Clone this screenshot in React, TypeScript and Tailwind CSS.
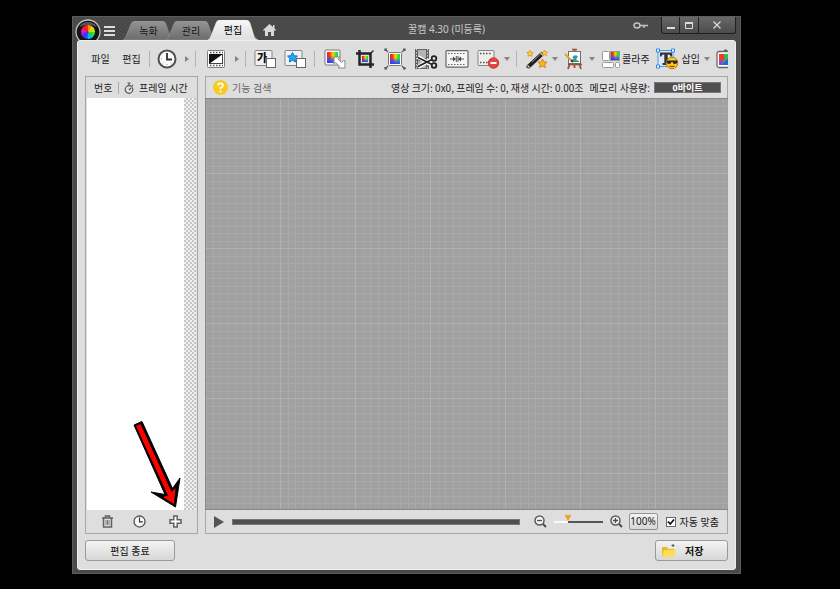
import React from "react";

const font = "font-['Noto_Sans','Noto_Sans_CJK_KR',sans-serif]";

type IconProps = { className?: string };
type Kids = { children?: React.ReactNode };

function Colors({ id, x, y, w, h }: { id: string; x: number; y: number; w: number; h: number }) {
  return (
    <g>
      <defs>
        <linearGradient id={id} x1="0" y1="0" x2="1" y2="0">
          <stop offset="0" stopColor="#ff1414" />
          <stop offset=".25" stopColor="#ff3a10" />
          <stop offset=".55" stopColor="#ffd400" />
          <stop offset=".8" stopColor="#3fe01c" />
          <stop offset="1" stopColor="#14d860" />
        </linearGradient>
        <linearGradient id={id + "v"} x1="0.600" y1="0" x2="0.400" y2="1">
          <stop offset=".35" stopColor="#2b50ff" stopOpacity="0" />
          <stop offset=".75" stopColor="#2b50ff" stopOpacity=".8" />
          <stop offset="1" stopColor="#3a34f8" />
        </linearGradient>
      </defs>
      <rect x={x} y={y} width={w} height={h} fill={`url(#${id})`} />
      <rect x={x} y={y} width={w} height={h} fill={`url(#${id}v)`} />
    </g>
  );
}

function ColorWheel() {
  const colors = ["#ff2a12", "#ff8a12", "#ffd21a", "#b6f000", "#3ee01c", "#12d890", "#12b7f0", "#1660ff", "#4b2ff0", "#a020e8", "#f019b0", "#ff1a3a"];
  return (
    <svg width="26" height="26" viewBox="0 0 26 26" aria-hidden="true">
      <circle cx="13" cy="13" r="12" fill="#141414" stroke="#c4c4c4" strokeWidth="1.300" />
      <path d="M4 8a10.500 10.500 0 0 1 18 0q-9-4-18 0z" fill="#555" />
      {colors.map((c, i) => {
        const a = ((i * 30 - 120) * Math.PI) / 180;
        const b = ((i * 30 - 87) * Math.PI) / 180;
        return (
          <path
            key={i}
            fill={c}
            d={`M13 13L${13 + 7 * Math.cos(a)} ${13 + 7 * Math.sin(a)}A7 7 0 0 1 ${13 + 7 * Math.cos(b)} ${13 + 7 * Math.sin(b)}Z`}
          />
        );
      })}
    </svg>
  );
}

function Tab({ children, active, width }: Kids & { active?: boolean; width: string }) {
  return (
    <button
      type="button"
      role="tab"
      aria-selected={!!active}
      className={`relative shrink-0 text-[10px] leading-[18px] ${width} ${active ? "z-10 h-5 text-black" : "-mr-2 h-[19px] text-[#181818]"}`}
    >
      <svg className="absolute inset-0 h-full w-full" viewBox="0 0 50 20" preserveAspectRatio="none" aria-hidden="true">
        <defs>
          <linearGradient id={active ? "tabOn" : "tabOff"} x1="0" y1="0" x2="0" y2="1">
            <stop offset="0" stopColor={active ? "#f6f6f6" : "#949494"} />
            <stop offset="1" stopColor={active ? "#dedede" : "#6c6c6c"} />
          </linearGradient>
        </defs>
        <path
          d="M0 20Q2 19 3 16L8 3Q9 0 12 0H38Q41 0 42 3L46 16Q47 19 50 20Z"
          fill={active ? "url(#tabOn)" : "url(#tabOff)"}
          stroke={active ? "#f0f0f0" : "#a0a0a0"}
          strokeWidth=".5"
        />
      </svg>
      <span className="relative">{children}</span>
    </button>
  );
}

function Tool({ label, className, children }: Kids & { label: string; className: string }) {
  return (
    <button type="button" aria-label={label} className={`flex h-6 shrink-0 items-center ${className}`}>
      {children}
    </button>
  );
}

function Divider({ className }: IconProps) {
  return <span className={`h-4 w-px shrink-0 bg-[#b4b4b4] ${className}`} />;
}

function Caret({ className, label }: IconProps & { label: string }) {
  return (
    <Tool label={label} className={className ?? ""}>
      <svg width="6" height="4" viewBox="0 0 6 4" aria-hidden="true">
        <path d="M0 0h6L3 4z" fill="#858585" />
      </svg>
    </Tool>
  );
}

function Next({ className, label }: IconProps & { label: string }) {
  return (
    <Tool label={label} className={className ?? ""}>
      <svg width="4" height="6" viewBox="0 0 4 6" aria-hidden="true">
        <path d="M0 0l4 3-4 3z" fill="#858585" />
      </svg>
    </Tool>
  );
}

function Clock({ size }: { size: number }) {
  return (
    <svg width={size} height={size} viewBox="0 0 20 20" fill="none" aria-hidden="true">
      <circle cx="10" cy="10" r="8.500" fill="#fafafa" stroke="#505050" strokeWidth="2" />
      <path d="M10 4v6.500h5" stroke="#303030" strokeWidth="1.800" />
      <path d="M4 10h1M10 16v-1M5.800 14.200l.6-.6M14.200 14.200l-.6-.6" stroke="#999" />
    </svg>
  );
}

function Star({ x, y, s, fill, stroke }: { x: number; y: number; s: number; fill: string; stroke: string }) {
  return (
    <path
      transform={`translate(${x} ${y}) scale(${s})`}
      d="M0-5L1.600-1.800 5-1.400 2.500 1 3.200 4.500 0 2.800-3.200 4.500-2.500 1-5-1.400-1.600-1.800Z"
      fill={fill}
      stroke={stroke}
      strokeLinejoin="round"
    />
  );
}

function Toolbar() {
  return (
    <div role="toolbar" aria-label="편집 도구" className="flex h-[35px] items-center overflow-hidden pl-[6px] text-[10px] leading-4 text-[#222]">
      <button type="button" className="mr-3 w-[19px] shrink-0 whitespace-nowrap">파일</button>
      <button type="button" className="w-[19px] shrink-0 whitespace-nowrap">편집</button>
      <Divider className="ml-2" />
      <Tool label="시간" className="ml-[7px]"><Clock size={20} /></Tool>
      <Next label="시간 더보기" className="ml-2" />
      <Divider className="ml-[6px]" />
      <Tool label="전환 효과" className="ml-[10px]">
        <svg width="20" height="20" viewBox="0 0 20 20" aria-hidden="true">
          <rect x="1.500" y="1.500" width="17" height="17" rx="1" fill="#fcfcfc" stroke="#7e7e7e" />
          <path d="M4 3.500h13M4 16.500h13" stroke="#555" strokeWidth="1.500" strokeDasharray="1.500 1.500" />
          <rect x="3.500" y="5.500" width="13" height="9" fill="#fff" stroke="#444" />
          <path d="M3 5h14L3 15z" fill="#111" />
        </svg>
      </Tool>
      <Next label="전환 더보기" className="ml-[9px]" />
      <Divider className="ml-[6px]" />
      <Tool label="텍스트 프레임" className="ml-2">
        <svg width="22" height="20" viewBox="0 0 22 20" aria-hidden="true">
          <rect x="1" y="1.500" width="17" height="15" rx="1" fill="#f2f2f2" stroke="#858585" />
          <text x="3" y="13" fontSize="11" fontWeight="800" fill="#111">가</text>
          <rect x="12.500" y="9.500" width="9" height="9" fill="#fff" stroke="#666" />
        </svg>
      </Tool>
      <Tool label="이미지 프레임" className="ml-2">
        <svg width="22" height="20" viewBox="0 0 22 20" aria-hidden="true">
          <rect x="1" y="1.500" width="17" height="15" rx="1" fill="#f2f2f2" stroke="#858585" />
          <Star x={8.500} y={8.500} s={1} fill="#20a6f8" stroke="#1178c8" />
          <rect x="12.500" y="9.500" width="9" height="9" fill="#fff" stroke="#666" />
        </svg>
      </Tool>
      <Divider className="ml-2" />
      <Tool label="크기 조절" className="ml-[9px]">
        <svg width="22" height="20" viewBox="0 0 22 20" aria-hidden="true">
          <rect x="1" y="1" width="15" height="15" rx="1" fill="#fff" stroke="#777" />
          <Colors id="cs" x={3} y={3} w={11} h={11} />
          <path d="M10 8h5.500l-1.700 1.700 3.700 3.700 1.700-1.700H21V19h-7l1.500-1.700-3.700-3.700L10 15z" fill="#fff" stroke="#888" />
        </svg>
      </Tool>
      <Tool label="자르기" className="ml-[9px]">
        <svg width="20" height="20" viewBox="0 0 20 20" aria-hidden="true">
          <rect x="5" y="5" width="10" height="10" fill="#ddd" />
          <Colors id="cc" x={7} y={7} w={6} h={6} />
          <path d="M4.500 1v14.500H19M1 4.500h14.500V19" fill="none" stroke="#252525" strokeWidth="2.500" />
          <path d="M14 6L18.500 1.500" stroke="#252525" strokeWidth="1.200" />
        </svg>
      </Tool>
      <Tool label="캔버스" className="ml-[9px]">
        <svg width="22" height="22" viewBox="0 0 22 22" aria-hidden="true">
          <path d="M1 3V1h2M19 1h2v2M21 19v2h-2M3 21H1v-2M1 1l3 3M21 1l-3 3M1 21l3-3M21 21l-3-3" fill="none" stroke="#555" strokeWidth="1.200" />
          <rect x="4.500" y="4.500" width="13" height="13" rx="1" fill="#fff" stroke="#777" />
          <Colors id="cr" x={6} y={6} w={10} h={10} />
        </svg>
      </Tool>
      <Tool label="프레임 잘라내기" className="ml-2">
        <svg width="24" height="22" viewBox="0 0 24 22" aria-hidden="true">
          <path d="M1 1h14v20H1z" fill="#606060" />
          <path d="M4 2h8v8H4zM4 13h8v7H4z" fill="#b4b4b4" />
          <path d="M2.500 1v20M13.500 1v20" stroke="#d0d0d0" strokeDasharray="1.500 1.500" />
          <path d="M4 9l14 8M4 19l14-8" stroke="#fff" strokeWidth="4" />
          <path d="M4 9.500l14 7M4 18.500l14-7" stroke="#222" strokeWidth="1.800" />
          <circle cx="20" cy="10.500" r="2.300" fill="#ddd" stroke="#222" strokeWidth="1.800" />
          <circle cx="20" cy="17.500" r="2.300" fill="#ddd" stroke="#222" strokeWidth="1.800" />
        </svg>
      </Tool>
      <Tool label="프레임 줄이기" className="ml-[7px]">
        <svg width="24" height="18" viewBox="0 0 24 18" aria-hidden="true">
          <rect x="1" y=".7" width="22" height="16.500" rx="1" fill="#f6f6f6" stroke="#666" strokeWidth="1.200" />
          <path d="M3 3.500h18M3 14.500h18" stroke="#666" strokeDasharray="1.500 1.500" />
          <path d="M5 9h5M19 9h-5M11.300 6v6M13 6v6" stroke="#555" />
          <path d="M8 6.500L11 9l-3 2.500zM16 6.500L13 9l3 2.500z" fill="#444" />
        </svg>
      </Tool>
      <Tool label="프레임 삭제" className="ml-2">
        <svg width="23" height="20" viewBox="0 0 23 20" aria-hidden="true">
          <rect x="1" y="1.500" width="16" height="15" rx="1" fill="#eee" stroke="#858585" />
          <path d="M3 4.500h12M3 13.500h12" stroke="#555" strokeWidth="1.300" strokeDasharray="1.500 1.500" />
          <circle cx="16.500" cy="14" r="5.200" fill="#e8443c" stroke="#c53933" />
          <path d="M13.500 14h6" stroke="#fff" strokeWidth="2" />
        </svg>
      </Tool>
      <Caret label="삭제 더보기" className="ml-1" />
      <Divider className="ml-[6px]" />
      <Tool label="효과" className="ml-[9px]">
        <svg width="22" height="20" viewBox="0 0 22 20" aria-hidden="true">
          <path d="M2.500 17.500L16 5" stroke="#222" strokeWidth="4" strokeLinecap="round" />
          <path d="M6 13l8-7.500" stroke="#888" />
          <path d="M1.500 16.500l2 2M14.500 4l2.500 2.500" stroke="#ddd" strokeWidth="1.200" />
          <Star x={4} y={4.500} s={0.650} fill="#ffce28" stroke="#d48413" />
          <Star x={18.500} y={4} s={0.600} fill="#ffce28" stroke="#d48413" />
          <Star x={16.500} y={14.500} s={0.900} fill="#ffb51d" stroke="#d9780c" />
        </svg>
      </Tool>
      <Caret label="효과 더보기" className="ml-1" />
      <Tool label="그리기" className="ml-[6px]">
        <svg width="20" height="22" viewBox="0 0 20 22" aria-hidden="true">
          <path d="M6 15L4 21M15 15l2 6M10.500 15v5" stroke="#a34b38" strokeWidth="1.800" />
          <path d="M8 1.500h5M10.500 1v3" stroke="#8c5140" strokeWidth="1.600" />
          <rect x="4.500" y="3.500" width="12" height="12" fill="#fff" stroke="#7b6b67" />
          <path d="M6 14l4-4 6 4z" fill="#3b9b6b" />
          <path d="M8 9.500q3-4 6-1l-2 3z" fill="#269fc2" />
          <path d="M4 16.500h14" stroke="#925241" strokeWidth="1.600" />
          <path d="M1 6l6 6" stroke="#dba52c" strokeWidth="2" />
          <path d="M7 12l2 2" stroke="#424242" strokeWidth="2" />
        </svg>
      </Tool>
      <Caret label="그리기 더보기" className="ml-[5px]" />
      <button type="button" className="ml-[7px] flex h-6 shrink-0 items-center gap-[2px] whitespace-nowrap">
        <svg width="18" height="18" viewBox="0 0 18 18" aria-hidden="true">
          <rect x=".5" y="1.500" width="7" height="9" rx="1" fill="#fff" stroke="#999" />
          <rect x=".5" y="12.500" width="11" height="5" rx="1" fill="#fff" stroke="#999" />
          <rect x="13.500" y="12.500" width="4" height="5" rx="1" fill="#fff" stroke="#999" />
          <rect x="8.500" y="1.500" width="9" height="9" fill="#fff" stroke="#999" />
          <Colors id="cg" x={9} y={2} w={8} h={8} />
        </svg>
        콜라주
      </button>
      <button type="button" className="ml-[6px] flex h-6 shrink-0 items-center gap-[3px] whitespace-nowrap">
        <svg width="23" height="22" viewBox="0 0 23 22" aria-hidden="true">
          <rect x="2" y="2.500" width="15" height="16" fill="#dceaf8" stroke="#4598ee" />
          <path d="M4 4.500h12v4h-1.500q0-2-2-2h-.8V15h1.800v2h-7v-2h1.800V6.500h-.8q-2 0-2 2H4z" fill="#333" />
          <path d="M.5 1h3v3h-3zM15.500 1h3v3h-3zM.5 17h3v3h-3z" fill="#fff" stroke="#2489ef" />
          <circle cx="16" cy="15" r="5.800" fill="#ffc421" stroke="#bd7e10" />
          <path d="M10.500 12.500h11V14q-.5 2-2.500 2t-2.500-2h-1q-.5 2-2.500 2t-2.500-2z" fill="#292929" />
          <path d="M13.500 18q2.500 1.500 5 0" fill="none" stroke="#6f4300" />
        </svg>
        삽입
      </button>
      <Caret label="삽입 더보기" className="ml-1" />
      <Tool label="색상" className="ml-[6px]">
        <svg width="18" height="20" viewBox="0 0 18 20" aria-hidden="true">
          <rect x="1" y="2.500" width="20" height="16" rx="2" fill="#fff" stroke="#666" strokeWidth="1.300" />
          <rect x="3" y="5" width="12" height="11" fill="#22c947" />
          <path d="M3 5h5l1 5-6 2z" fill="#f43c25" />
          <path d="M5 16l6-6h4v6z" fill="#2465ec" />
          <path d="M3 12l5-2-3 6H3z" fill="#b52add" />
          <path d="M9 0l3 2H8z" fill="#555" />
        </svg>
      </Tool>
    </div>
  );
}

function TitleBar() {
  return (
    <header className="flex h-[23px] items-start overflow-y-clip">
      <div className="-ml-[2px] mt-[2px] shrink-0"><ColorWheel /></div>
      <button type="button" aria-label="메뉴" className="ml-[3px] mt-[9px] shrink-0">
        <svg width="11" height="10" viewBox="0 0 11 10" aria-hidden="true">
          <path d="M0 1h11M0 5h11M0 9h11" stroke="#dcdcdc" strokeWidth="2" />
        </svg>
      </button>
      <div role="tablist" className="ml-2 flex shrink-0 items-end self-end">
        <Tab width="w-[51px]">녹화</Tab>
        <Tab width="w-[50px]">관리</Tab>
        <Tab width="w-[50px]" active>편집</Tab>
      </div>
      <button type="button" aria-label="홈" className="ml-[5px] mt-[7px] shrink-0">
        <svg width="13" height="12" viewBox="0 0 13 12" aria-hidden="true">
          <path d="M6.500 0L10 3V1h1.500v3.500L13 6l-1 1-1-.8V12H8V8H5v4H2V6.200L1 7 0 6z" fill="#d8d8d8" />
        </svg>
      </button>
      <h1 className="mt-1 flex-1 whitespace-nowrap pr-4 text-center text-[10px] leading-4 text-[#c8c8c8]">꿀캠 4.30 (미등록)</h1>
      <button type="button" aria-label="등록" className="mr-3 mt-[5px] shrink-0">
        <svg width="16" height="7" viewBox="0 0 16 7" fill="none" aria-hidden="true">
          <ellipse cx="4" cy="3.500" rx="3" ry="2.500" stroke="#c2c2c2" strokeWidth="1.500" />
          <path d="M6 3.500h9M11 4v2" stroke="#c2c2c2" strokeWidth="1.500" />
        </svg>
      </button>
      <div className="flex h-[17px] shrink-0 divide-x divide-[#222] rounded-b-[3px] border border-t-0 border-[#202020] bg-gradient-to-b from-[#686868] to-[#4c4c4c]">
        <button type="button" aria-label="최소화" className="grid w-[18px] place-items-center">
          <svg width="8" height="8" aria-hidden="true"><path d="M0 7h8" stroke="#ddd" strokeWidth="2" /></svg>
        </button>
        <button type="button" aria-label="최대화" className="grid w-[19px] place-items-center">
          <svg width="8" height="7" aria-hidden="true"><path d="M.5 0v6.500h7V0" fill="none" stroke="#ddd" /><path d="M0 1h8" stroke="#ddd" strokeWidth="2" /></svg>
        </button>
        <button type="button" aria-label="닫기" className="grid w-9 place-items-center">
          <svg width="8" height="8" aria-hidden="true"><path d="M.5.5l7 7m0-7l-7 7" stroke="#ddd" strokeWidth="1.200" /></svg>
        </button>
      </div>
    </header>
  );
}

function FramePanel() {
  return (
    <section aria-label="프레임 목록" className="flex w-[113px] shrink-0 flex-col border border-[#a6a6a6] p-px">
      <table className="w-full text-left text-[10px] leading-5 text-[#222]">
        <thead>
          <tr>
            <th className="w-[31px] whitespace-nowrap pl-[7px] font-normal">번호</th>
            <th className="whitespace-nowrap font-normal">
              <span className="flex items-center">
                <span className="h-3 w-px bg-[#aaa]" />
                <svg className="ml-[5px] mr-[5px]" width="10" height="12" viewBox="0 0 10 12" fill="none" aria-hidden="true">
                  <circle cx="5" cy="7.500" r="3.800" stroke="#555" strokeWidth="1.200" />
                  <path d="M3.500 1h3M5 1v2.500M8 3l1 1M5 8l2-2" stroke="#555" strokeWidth="1.200" />
                </svg>
                프레임 시간
              </span>
            </th>
          </tr>
        </thead>
      </table>
      <div className="relative flex min-h-40 flex-1 bg-white">
        <div className="ml-auto w-3 bg-[repeating-conic-gradient(#c6c6c6_0%_25%,#f0f0f0_0%_50%)] bg-[size:4px_4px]" />
        <svg className="absolute bottom-0 right-[11px]" width="55" height="92" viewBox="130 418 55 92" aria-hidden="true">
          <path d="M134 425l8-3.500 30.500 67 7.500-10.500-4.500 29-24.500-15 14 2.500z" fill="#000" stroke="#000" strokeLinejoin="miter" />
          <path d="M136 426l4.500-2 31 68 4-4-1.500 16-11-7 5-1.500z" fill="#f00" />
        </svg>
      </div>
      <div className="flex h-[22px] items-center pl-[14px]">
        <button type="button" aria-label="삭제">
          <svg width="13" height="13" viewBox="0 0 13 13" fill="none" stroke="#626262" aria-hidden="true">
            <path d="M1 3h11M4.500 3V1h4v2M2.500 3v9h8V3" strokeWidth="1.500" />
            <path d="M5 5v5M6.500 5v5M8 5v5" strokeWidth=".8" />
          </svg>
        </button>
        <button type="button" aria-label="시간 설정" className="ml-[19px]"><Clock size={13} /></button>
        <button type="button" aria-label="프레임 추가" className="ml-[23px]">
          <svg width="13" height="13" viewBox="0 0 13 13" aria-hidden="true">
            <path d="M4.800 1h3.400v3.800H12v3.400H8.200V12H4.800V8.200H1V4.800h3.800z" fill="#fff" stroke="#606060" strokeWidth="1.500" />
          </svg>
        </button>
      </div>
    </section>
  );
}

function Magnifier({ plus }: { plus?: boolean }) {
  return (
    <svg width="13" height="13" viewBox="0 0 13 13" fill="none" aria-hidden="true">
      <circle cx="5.500" cy="5.500" r="4.500" fill="#f2f2f2" stroke="#5c5c5c" strokeWidth="1.500" />
      <path d="M9 9l3 3" stroke="#4c4c4c" strokeWidth="2" />
      <path d={plus ? "M3 5.500h5M5.500 3v5" : "M3 5.500h5"} stroke="#4c4c4c" strokeWidth="1.300" />
    </svg>
  );
}

function PreviewPanel() {
  return (
    <section aria-label="미리보기" className="flex min-w-0 flex-1 flex-col border border-[#a6a6a6]">
      <div className="flex h-[21px] items-center overflow-hidden whitespace-nowrap pl-[7px] pr-[6px] text-[10px] leading-4 text-[#222]">
        <svg className="shrink-0" width="15" height="15" viewBox="0 0 15 15" fill="none" aria-hidden="true">
          <circle cx="7.500" cy="7.500" r="7.500" fill="#f6cb20" />
          <path d="M5 5.500Q5 3.300 7.500 3.300T10 5.500Q10 7 7.500 8v1.200" stroke="#fff" strokeWidth="1.700" />
          <circle cx="7.500" cy="11.500" r="1" fill="#fff" />
        </svg>
        <input type="text" aria-label="기능 검색" placeholder="기능 검색" className="ml-1 w-20 min-w-0 bg-transparent outline-none placeholder:text-[#666]" />
        <span className="ml-auto font-['Noto_Sans_CJK_KR',sans-serif]">영상 크기: 0x0, 프레임 수: 0, 재생 시간: 0.00조</span>
        <span className="ml-[6px]">메모리 사용량:</span>
        <span className="ml-1 h-[11px] w-[67px] shrink-0 border border-[#777] bg-[#505050] text-center text-[9px] font-bold leading-[9px] text-white">0바이트</span>
      </div>
      <div className="-mx-px min-h-40 flex-1 border-y border-l border-y-[#858585] border-l-[#8a8a8a] bg-[#a1a1a1] bg-[image:linear-gradient(90deg,transparent_74px,#b1b1b1_74px),linear-gradient(transparent_74px,#b1b1b1_74px),linear-gradient(90deg,transparent_7px,#a9a9a9_7px,#a9a9a9_8px,transparent_8px,transparent_14px,#a9a9a9_14px),linear-gradient(transparent_7px,#a9a9a9_7px,#a9a9a9_8px,transparent_8px,transparent_14px,#a9a9a9_14px)] bg-[size:75px_75px,75px_75px,15px_15px,15px_15px]" />
      <div className="flex h-[23px] items-center pl-2 pr-2 text-[10px] leading-4 text-[#222]">
        <button type="button" aria-label="재생" className="shrink-0">
          <svg width="10" height="12" viewBox="0 0 10 12" aria-hidden="true"><path d="M0 0l10 6-10 6z" fill="#555" /></svg>
        </button>
        <input
          type="range"
          aria-label="재생 위치"
          defaultValue={0}
          className="ml-2 h-[6px] min-w-0 flex-1 appearance-none border border-[#777] bg-[#505050] [&::-webkit-slider-thumb]:h-0 [&::-webkit-slider-thumb]:w-0 [&::-webkit-slider-thumb]:appearance-none"
        />
        <button type="button" aria-label="축소" className="ml-[14px] shrink-0"><Magnifier /></button>
        <input
          type="range"
          aria-label="확대 비율"
          defaultValue={26}
          className="ml-[7px] h-[14px] w-[49px] shrink-0 appearance-none bg-transparent [&::-webkit-slider-runnable-track]:h-[2px] [&::-webkit-slider-runnable-track]:bg-[linear-gradient(90deg,#fafafa_14px,#555_14px)] [&::-webkit-slider-thumb]:-mt-[6px] [&::-webkit-slider-thumb]:h-[7px] [&::-webkit-slider-thumb]:w-[7px] [&::-webkit-slider-thumb]:appearance-none [&::-webkit-slider-thumb]:bg-[#f5a21c] [&::-webkit-slider-thumb]:[clip-path:polygon(0_0,100%_0,50%_100%)]"
        />
        <button type="button" aria-label="확대" className="ml-[7px] shrink-0"><Magnifier plus /></button>
        <button type="button" className="ml-[6px] h-[17px] w-[29px] shrink-0 rounded-[2px] border border-[#949494] bg-gradient-to-b from-[#f2f2f2] to-[#d8d8d8] text-center leading-[15px]">100%</button>
        <label className="ml-2 flex shrink-0 items-center whitespace-nowrap">
          <span className="mr-1 grid h-[10px] w-[10px]">
            <input type="checkbox" defaultChecked className="peer col-start-1 row-start-1 h-[10px] w-[10px] appearance-none border border-[#666] bg-white" />
            <svg className="pointer-events-none invisible relative col-start-1 row-start-1 peer-checked:visible" width="10" height="10" fill="none" aria-hidden="true">
              <path d="M2 4.500L4.300 7 8 2.500" stroke="#111" strokeWidth="1.800" />
            </svg>
          </span>
          자동 맞춤
        </label>
      </div>
    </section>
  );
}

export default function App() {
  return (
    <main className={`flex min-h-screen bg-black pb-[15px] pl-[72px] pr-[99px] pt-4 ${font}`}>
      <div className="flex min-w-0 flex-1 flex-col border border-[#5c5c5c] bg-[#464646] bg-[image:linear-gradient(45deg,transparent_25%,#4e4e4e_25%,#4e4e4e_50%,transparent_50%,transparent_75%,#4e4e4e_75%)] bg-[size:4px_4px] px-1 pb-[3px]">
        <TitleBar />
        <div className="flex flex-1 flex-col rounded-[3px] border border-[#efefef] bg-[#dedede] px-[7px] pb-2">
          <Toolbar />
          <div className="flex flex-1 gap-[7px]">
            <FramePanel />
            <PreviewPanel />
          </div>
          <footer className="flex justify-between pt-[6px] text-[10px] leading-4 text-[#111]">
            <button type="button" className="h-[21px] w-[90px] rounded-[3px] border border-[#9a9a9a] bg-gradient-to-b from-[#f3f3f3] to-[#d7d7d7]">편집 종료</button>
            <button type="button" className="flex h-[21px] w-[73px] items-center rounded-[3px] border border-[#9a9a9a] bg-gradient-to-b from-[#f3f3f3] to-[#d7d7d7] pl-[6px] font-bold">
              <svg className="mr-[9px]" width="14" height="13" viewBox="0 0 14 13" aria-hidden="true">
                <path d="M0 3h5l1 2h6v7H0z" fill="#eab92c" />
                <path d="M2 6h12l-2 7H0z" fill="#ffdc55" />
                <path d="M11 0v3M9.500 1.500h3" stroke="#555" />
              </svg>
              저장
            </button>
          </footer>
        </div>
      </div>
    </main>
  );
}
